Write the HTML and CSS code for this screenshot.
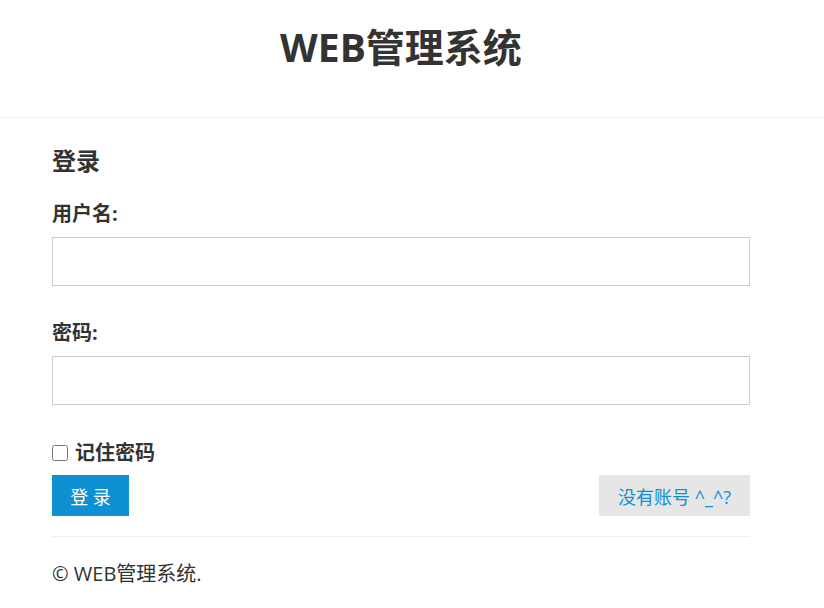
FILE: index.html
```html
<!DOCTYPE html>
<html lang="zh-CN">
<head>
<meta charset="utf-8">
<title>WEB管理系统</title>
<link rel="stylesheet" href="styles.css">
</head>
<body>
<header class="header">
  <div class="container">
    <h1 class="title">WEB管理系统</h1>
  </div>
</header>
<main class="container main">
  <h2 class="heading">登录</h2>
  <form class="form">
    <label class="label" for="username">用户名:</label>
    <input class="input" type="text" id="username">
    <label class="label label-pwd" for="password">密码:</label>
    <input class="input" type="password" id="password">
    <label class="remember"><input type="checkbox" class="check"> 记住密码</label>
    <div class="actions">
      <button type="button" class="btn btn-primary">登 录</button>
      <button type="button" class="btn btn-default">没有账号 ^_^?</button>
    </div>
  </form>
  <hr class="divider">
  <p class="footer">© WEB管理系统.</p>
</main>
</body>
</html>
```
FILE: styles.css
```css
html, body {
  margin: 0;
  padding: 0;
  background: #fff;
}
body {
  font-family: "Open Sans", "Noto Sans CJK SC", sans-serif;
  color: #333;
  font-size: 20px;
}
.container {
  width: 698px;
  margin-left: 52px;
}
.header {
  height: 118px;
  border-bottom: 1px solid #eee;
  box-sizing: border-box;
  padding-top: 23px;
}
.title {
  margin: 0;
  font-size: 39px;
  line-height: 48px;
  font-weight: 700;
  text-align: center;
}
.main {
  padding-top: 28px;
}
.heading {
  margin: 0;
  font-size: 24px;
  line-height: 30px;
  font-weight: 700;
}
.form {
  display: flex;
  flex-direction: column;
  margin-top: 25px;
}
.label {
  font-weight: 700;
  font-size: 20px;
  line-height: 26px;
  margin-bottom: 10px;
}
.label-pwd {
  margin-top: 34px;
}
.input {
  box-sizing: border-box;
  height: 49px;
  border: 1px solid #ccc;
  margin: 0;
  padding: 0 10px;
  font-size: 18px;
  outline: none;
}
.remember {
  margin-top: 35px;
  font-weight: 700;
  font-size: 20px;
  line-height: 26px;
  display: flex;
  align-items: center;
  gap: 7px;
}
.check {
  margin: 0;
  width: 16px;
  height: 16px;
}
.actions {
  display: flex;
  justify-content: space-between;
  margin-top: 9px;
}
.btn {
  height: 41px;
  border: none;
  margin: 0;
  padding: 0;
  font-family: inherit;
  font-size: 18px;
  cursor: pointer;
}
.btn-primary {
  width: 77px;
  background: #0e90d2;
  color: #fff;
}
.btn-default {
  width: 151px;
  background: #e6e6e6;
  color: #0e90d2;
}
.divider {
  border: none;
  border-top: 1px solid #eee;
  margin: 20px 0 0;
}
.footer {
  margin: 24px 0 0;
  font-size: 20px;
  line-height: 26px;
}
```
